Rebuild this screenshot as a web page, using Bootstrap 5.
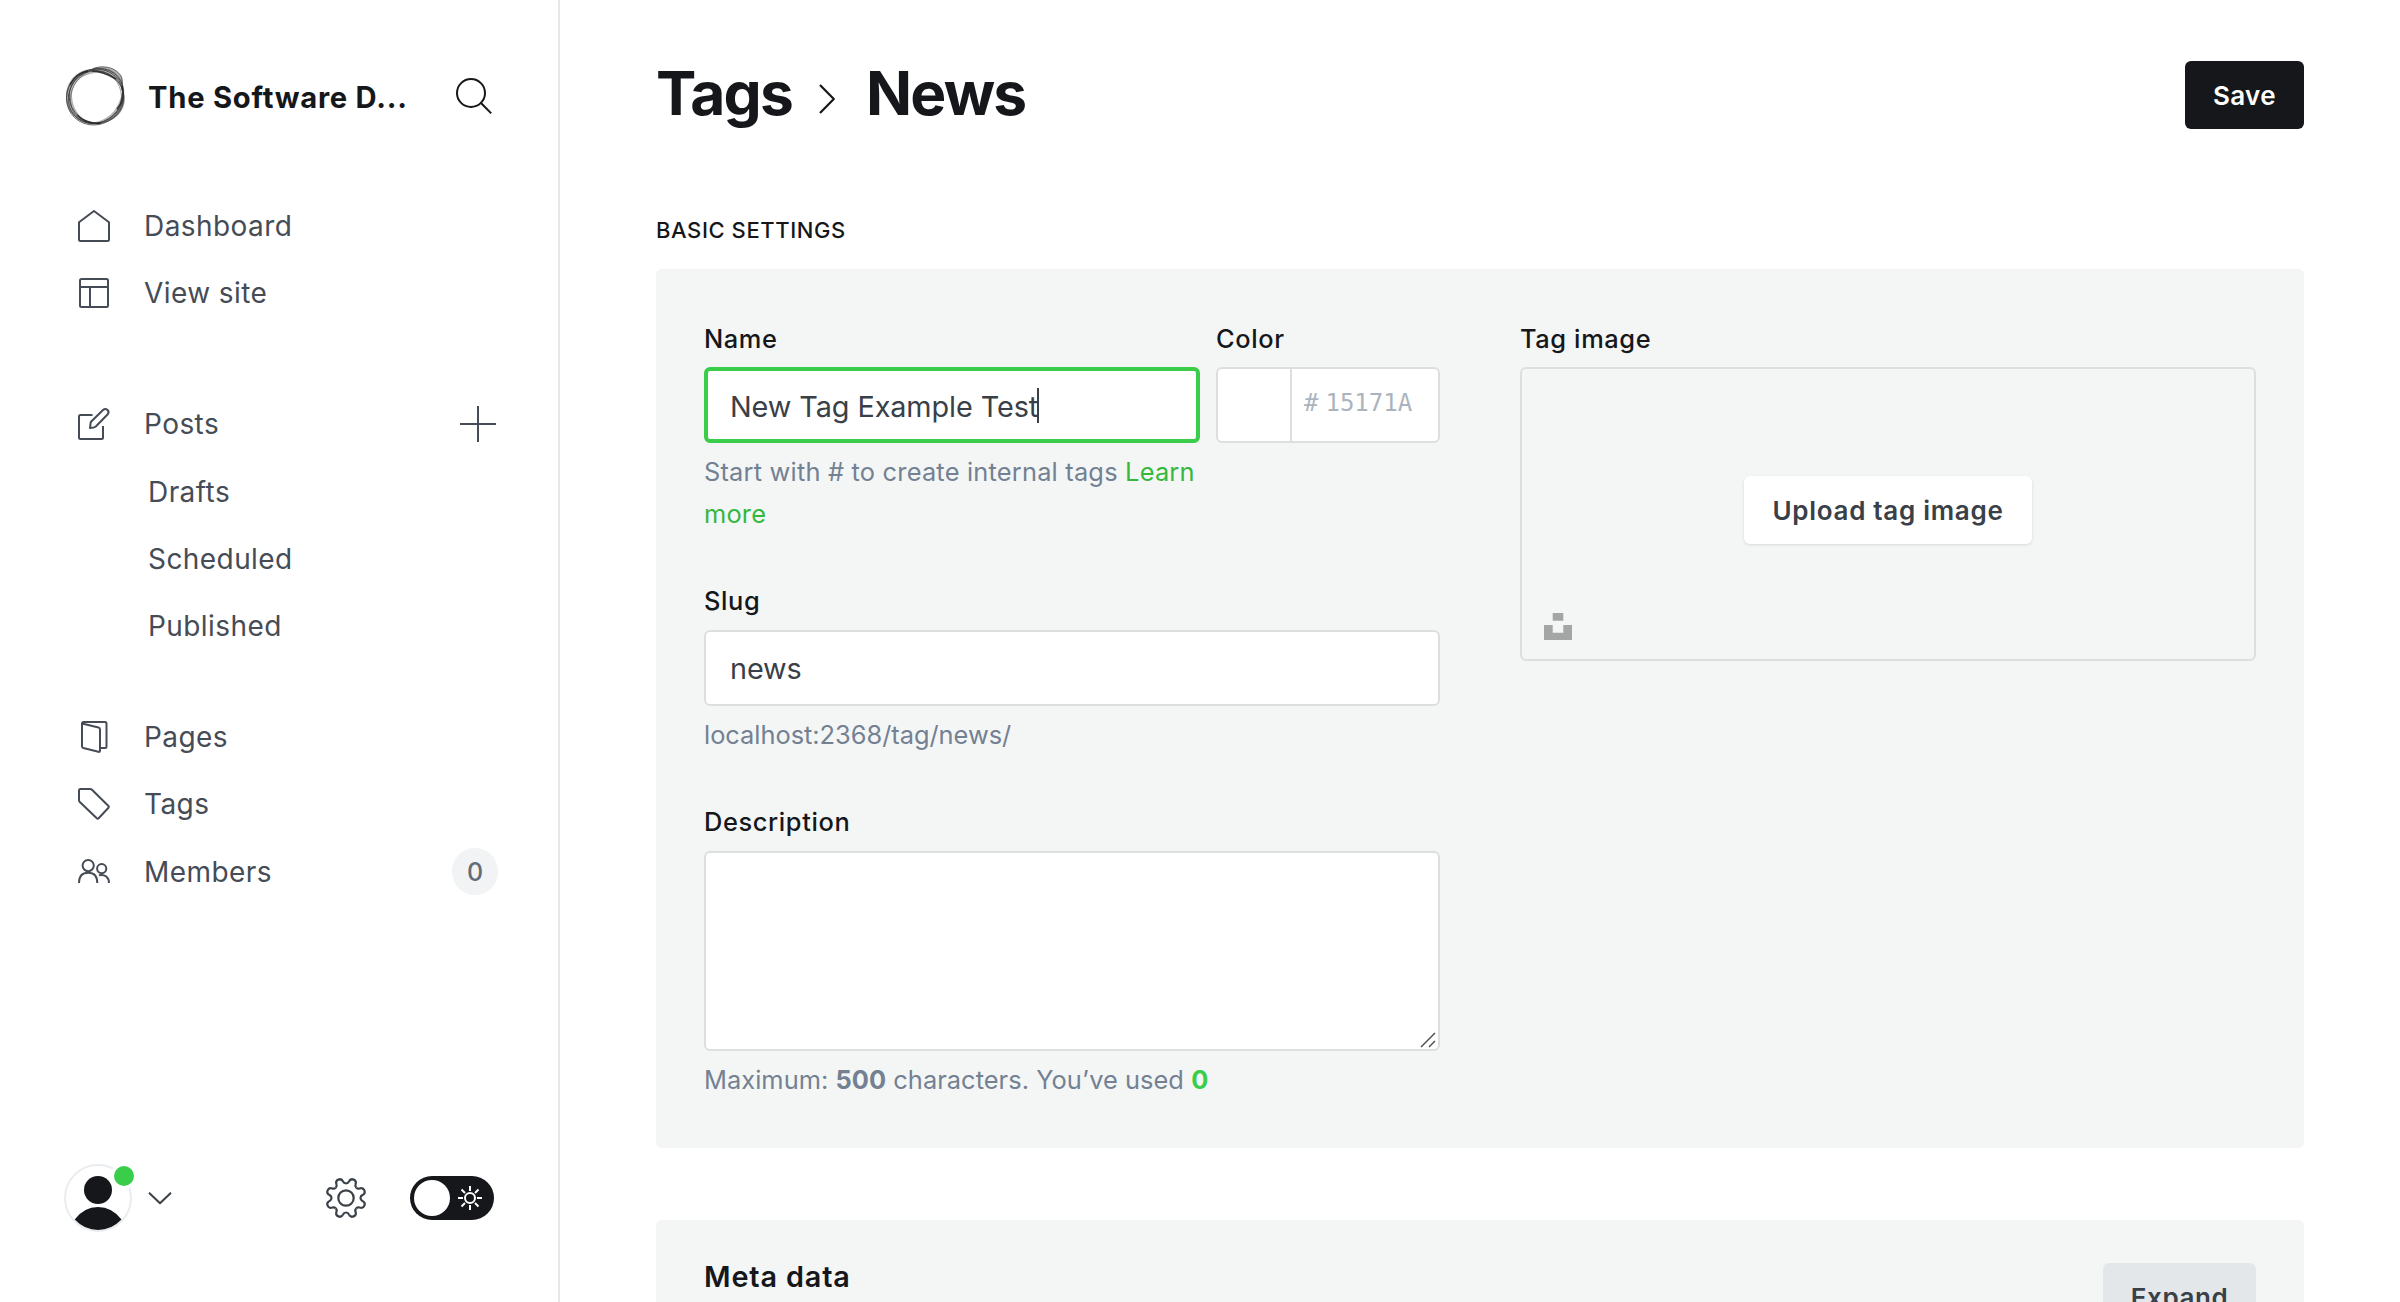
<!DOCTYPE html>
<html lang="en">
<head>
<meta charset="utf-8">
<title>Tags - News</title>
<link rel="stylesheet" href="https://cdn.jsdelivr.net/npm/bootstrap@5.3.0/dist/css/bootstrap.min.css">
<style>
:root{--ink:#15171a;--slate:#394047;--muted-ink:#738192;--green:#3acd4a;--panel:#f4f6f6;--line:#dddfdf}
body{font-family:Inter,sans-serif;font-size:28px;color:var(--slate);background:#fff;height:1302px;overflow:hidden;letter-spacing:.43px}
svg{display:block;flex:none;overflow:visible}
.stroke-icon{fill:none;stroke:currentColor;stroke-width:2;stroke-linejoin:round}
.side{width:560px;border-right:2px solid #e5e8eb;padding:66px 60px 0 65px}
.side-head{height:60px}
.site-name{font-weight:700;color:var(--ink);margin-left:22px;font-size:29.2px;letter-spacing:.75px;padding-top:3px}
.menu-row{height:67.3px;padding-left:13px;color:#454c55}
.menu-row svg{margin-right:34px}
.menu-row .plus-icon{margin:0 2px 0 auto}
.sub-row{padding-left:83px}
.menu-one{margin-top:66.5px}
.menu-two{margin-top:63.5px}
.menu-three{margin-top:43.5px}
.count-pill{width:46px;height:47px;background:#f1f3f4;border-radius:24px;color:#626d79;font-size:25px;font-weight:500;margin-left:auto;letter-spacing:0;padding-top:2px}
.side-foot{height:68px;margin-bottom:70px;margin-left:-1px}
.toggle-pill{width:84px;height:44px;border-radius:22px;background:var(--ink);padding:0 12px 0 4px}
.knob{width:36px;height:36px;border-radius:50%;background:#fff}
.main-area{padding:61px 96px 0 96px;min-width:0}
.page-title{font-size:60.5px;font-weight:700;color:var(--ink);line-height:68px;margin:-5px 0 0;letter-spacing:-1.8px}
.btn-box{height:68px;border-radius:6px;font-size:26px;font-weight:600;border:0;padding:0;letter-spacing:.3px}
.btn-save{width:119px;background:var(--ink);color:#fff}
.section-title{font-size:22px;font-weight:500;color:var(--ink);letter-spacing:.58px;line-height:30px;margin:86px 0 24px}
.panel-box{background:var(--panel);border-radius:6px;padding:53px 48px 0}
.field-col{width:736px}
.field-label{display:block;font-size:25.4px;font-weight:500;color:var(--ink);line-height:34px;margin-bottom:11px;letter-spacing:.62px}
.field-box{height:76px;background:#fff;border:2px solid var(--line);border-radius:6px;padding:2px 24px 0;font-size:28.8px;letter-spacing:-.08px;color:var(--slate)}
.field-live{border:4px solid var(--green);padding:3px 22px 0}
.caret-bar{width:2px;height:35px;background:var(--slate);margin:-3px 0 0 -1px}
.hint{font-size:25.4px;line-height:41.5px;color:var(--muted-ink);margin:8px 0 0;letter-spacing:.2px}
.hint-url{letter-spacing:-.02px}
.hint-count{letter-spacing:.04px}
.hint a{color:#34b83f;text-decoration:none}
.hint .used{color:var(--green)}
.next-field{margin-top:50px}
.hex-box{width:224px;padding:0;font-family:"DejaVu Sans Mono",monospace;font-size:24px;letter-spacing:0;color:#abb4be}
.swatch-part{width:74px;border-right:2px solid var(--line)}
.drop-box{height:294px;border:2px solid var(--line);border-radius:6px}
.btn-upload{width:288px;background:#fff;color:var(--slate);box-shadow:0 1px 3px rgba(0,0,0,.12);letter-spacing:.7px}
.meta-title{font-size:28.8px;font-weight:600;color:var(--ink);letter-spacing:.85px;line-height:36px}
.btn-expand{width:153px;background:#e3e7ea;color:var(--slate);letter-spacing:.6px}
</style>
</head>
<body>
<div class="d-flex h-100 overflow-hidden">
  <nav class="side d-flex flex-column flex-shrink-0 h-100">
    <div class="side-head d-flex align-items-center">
      <svg width="61" height="60" viewBox="0 0 61 60" fill="none" stroke="#222">
        <path fill="#666" fill-opacity=".5" fill-rule="evenodd" stroke="none" d="M1 30C1 14 14 3 27 3 33-1 50 0 56 10c3 5 1 10 2 14 6 14-3 28-15 31C20 64 1 50 1 30ZM7 30c1 17 12 26 24 26 16-4 23-15 26-30C56 15 44 7 31 7 17 8 7 17 7 30Z"/>
        <g stroke-width=".8" opacity=".8">
          <ellipse cx="30" cy="31" rx="29" ry="27.5" transform="rotate(-35 30 31)"/>
          <ellipse cx="31" cy="30" rx="26" ry="29" transform="rotate(48 31 30)"/>
          <ellipse cx="31.5" cy="31" rx="27.5" ry="26" transform="rotate(20 31.5 31)"/>
          <ellipse cx="32" cy="30" rx="25" ry="29" transform="rotate(38 32 30)" opacity=".6"/>
          <ellipse cx="29" cy="31" rx="27.5" ry="27" opacity=".7"/>
          <path d="M24 5C34-2 50 0 56 10q2 4 1 14"/>
        </g>
        <path stroke-width="1.500" opacity=".85" d="M12 49c6 7 14 9 24 8M23 5c-7 1-14 6-18 14M57 20c2 8 1 16-5 23M27 5c8 0 17 4 24 8"/>
      </svg>
      <span class="site-name text-nowrap">The Software D...</span>
      <svg class="stroke-icon ms-auto" style="margin-right:6px;color:#15171a" width="36" height="36" viewBox="0 0 36 36"><circle cx="15" cy="15" r="14"/><path d="M25 25l10.2 10.4"/></svg>
    </div>

    <div class="menu-one">
      <div class="menu-row d-flex align-items-center"><svg class="stroke-icon" width="32" height="32" viewBox="0 0 32 32"><path d="M1 12.3 16 1l15 11.3V29.500q0 1.500-1.500 1.500h-27Q1 31 1 29.500Z"/></svg>Dashboard</div>
      <div class="menu-row d-flex align-items-center"><svg class="stroke-icon" width="32" height="32" viewBox="0 0 32 32"><rect x="2" y="2" width="28" height="28" rx="1.500"/><path d="M2 10h28M12 10v20"/></svg>View site</div>
    </div>
    <div class="menu-two">
      <div class="menu-row d-flex align-items-center"><svg class="stroke-icon" width="32" height="32" viewBox="0 0 32 32"><path d="M14.500 7H2.500Q1 7 1 8.500v21Q1 31 2.500 31h21q1.500 0 1.500-1.500V18M12 20l.8-6L25 2q2.300-2 4.500 0t0 4.500L17.800 18.500Q16 20 12 20Z"/></svg>Posts
        <svg class="stroke-icon plus-icon" width="36" height="36" viewBox="0 0 36 36"><path d="M18 0v36M0 18h36"/></svg></div>
      <div class="menu-row sub-row d-flex align-items-center">Drafts</div>
      <div class="menu-row sub-row d-flex align-items-center">Scheduled</div>
      <div class="menu-row sub-row d-flex align-items-center">Published</div>
    </div>
    <div class="menu-three">
      <div class="menu-row d-flex align-items-center"><svg class="stroke-icon" width="32" height="32" viewBox="0 0 32 32"><path d="M4 2.500 20.500 6.500q1.500.4 1.500 2V29.500q0 1.700-1.600 1.300L5.300 27Q4 26.600 4 25.300V2.500Q4 1 5.500 1H27q1.500 0 1.500 1.500V25.500Q28.500 27 27 27h-5"/></svg>Pages</div>
      <div class="menu-row d-flex align-items-center"><svg class="stroke-icon" width="32" height="32" viewBox="0 0 32 32"><path d="M2.500 1H12.200q1 0 1.800.8L30.500 18q.8.900 0 1.800L20.600 30.300q-.9.900-1.800 0L1.800 14Q1 13.200 1 12.200V2.500Q1 1 2.500 1Z"/></svg>Tags</div>
      <div class="menu-row d-flex align-items-center"><svg class="stroke-icon" width="32" height="32" viewBox="0 0 32 32"><circle cx="10.200" cy="9.600" r="5.600"/><path d="M1 27C1 19.500 5 16.700 10.200 16.700S19.300 19.500 19.300 27M21 19.200C27 17.800 31 21.500 31 27"/><circle cx="23.700" cy="12.600" r="4.600"/></svg>Members
        <span class="count-pill d-flex align-items-center justify-content-center">0</span></div>
    </div>

    <div class="side-foot d-flex align-items-center mt-auto">
      <svg width="70" height="68" viewBox="0 0 70 68">
        <circle cx="34" cy="34" r="33" fill="#fff" stroke="#e9edf0" stroke-width="2"/>
        <circle cx="34" cy="26" r="14" fill="#15171a"/>
        <path fill="#15171a" d="M10.700 55.500Q20 43 34 43T57.500 55.500Q47.500 66 34 66T10.700 55.500Z"/>
        <circle cx="60" cy="12" r="13" fill="#fff"/><circle cx="60" cy="12" r="10" fill="#3acd4a"/>
      </svg>
      <svg class="stroke-icon" style="margin-left:15px" width="22" height="12" viewBox="0 0 22 12"><path d="M0 .7 11 11.300 22 .7"/></svg>
      <svg class="stroke-icon" style="margin-left:155px" width="40" height="40" viewBox="-20 -20 40 40">
        <defs><path id="tooth" d="M-5.550-13.400C-4.200-14-3.600-14.800-3.600-16.200-3.500-18.500-2.600-19.900 0-19.900S3.500-18.500 3.600-16.200C3.600-14.800 4.200-14 5.550-13.400"/></defs>
        <g stroke-width="2.200"><use href="#tooth" transform="rotate(22.500)"/><use href="#tooth" transform="rotate(67.500)"/><use href="#tooth" transform="rotate(112.500)"/><use href="#tooth" transform="rotate(157.500)"/><use href="#tooth" transform="rotate(202.500)"/><use href="#tooth" transform="rotate(247.500)"/><use href="#tooth" transform="rotate(292.500)"/><use href="#tooth" transform="rotate(337.500)"/><circle r="7.700"/></g>
      </svg>
      <div class="toggle-pill d-flex align-items-center justify-content-between" style="margin-left:44px">
        <span class="knob"></span>
        <svg width="24" height="24" viewBox="-12 -12 24 24" fill="none" stroke="#fff" stroke-width="2"><circle r="5"/><path d="M0-12v5M0 12V7M-12 0h5M12 0H7M-8.500-8.500-5-5M8.500-8.500 5-5M-8.500 8.500-5 5M8.500 8.500 5 5"/></svg>
      </div>
    </div>
  </nav>

  <main class="main-area flex-grow-1">
    <header class="d-flex justify-content-between align-items-center">
      <h1 class="page-title d-flex align-items-center">Tags
        <svg class="stroke-icon" style="margin:13px 31px 0 27px" width="16" height="30" viewBox="0 0 16 30"><path stroke-width="2.200" d="M1 1l13.800 14L1 29"/></svg>News</h1>
      <button class="btn btn-box btn-save">Save</button>
    </header>

    <h2 class="section-title">BASIC SETTINGS</h2>
    <section class="panel-box d-flex justify-content-between" style="height:879px">
      <div class="field-col">
        <div class="d-flex justify-content-between">
          <div style="width:496px">
            <label class="field-label">Name</label>
            <div class="field-box field-live d-flex align-items-center">New Tag Example Test<span class="caret-bar"></span></div>
            <p class="hint">Start with # to create internal tags <a href="#">Learn more</a></p>
          </div>
          <div>
            <label class="field-label">Color</label>
            <div class="field-box hex-box d-flex align-items-stretch">
              <span class="swatch-part"></span>
              <span class="d-flex align-items-center" style="padding:0 0 4px 12px">#<span style="margin-left:7px">15171A</span></span>
            </div>
          </div>
        </div>
        <label class="field-label next-field" style="margin-bottom:12px">Slug</label>
        <div class="field-box d-flex align-items-center">news</div>
        <p class="hint hint-url">localhost:2368/tag/news/</p>
        <label class="field-label next-field" style="margin-top:49px;margin-bottom:12px">Description</label>
        <div class="field-box d-flex align-items-end justify-content-end p-0" style="height:200px">
          <svg width="18" height="18" viewBox="0 0 18 18" stroke="#555" stroke-width="1.500"><path d="M1 16 15 2M9 16l6-6"/></svg>
        </div>
        <p class="hint hint-count">Maximum: <b>500</b> characters. You’ve used <b class="used">0</b></p>
      </div>
      <div class="field-col">
        <label class="field-label">Tag image</label>
        <div class="drop-box position-relative d-flex align-items-center justify-content-center">
          <button class="btn btn-box btn-upload" style="margin-bottom:8px">Upload tag image</button>
          <svg class="position-absolute" style="left:22px;bottom:19px" width="28" height="27" viewBox="0 0 28 27" fill="#a4a6a5"><path d="M8.700 0h10.600v7.700H8.700ZM0 12h8.700v7.700h10.600V12H28v15H0Z"/></svg>
        </div>
      </div>
    </section>

    <section class="panel-box d-flex justify-content-between align-items-start" style="margin-top:72px;padding-top:43px;height:200px">
      <div class="meta-title" style="margin-top:-4px">Meta data</div>
      <button class="btn btn-box btn-expand">Expand</button>
    </section>
  </main>
</div>
<script src="https://cdn.jsdelivr.net/npm/bootstrap@5.3.0/dist/js/bootstrap.bundle.min.js"></script>
</body>
</html>
